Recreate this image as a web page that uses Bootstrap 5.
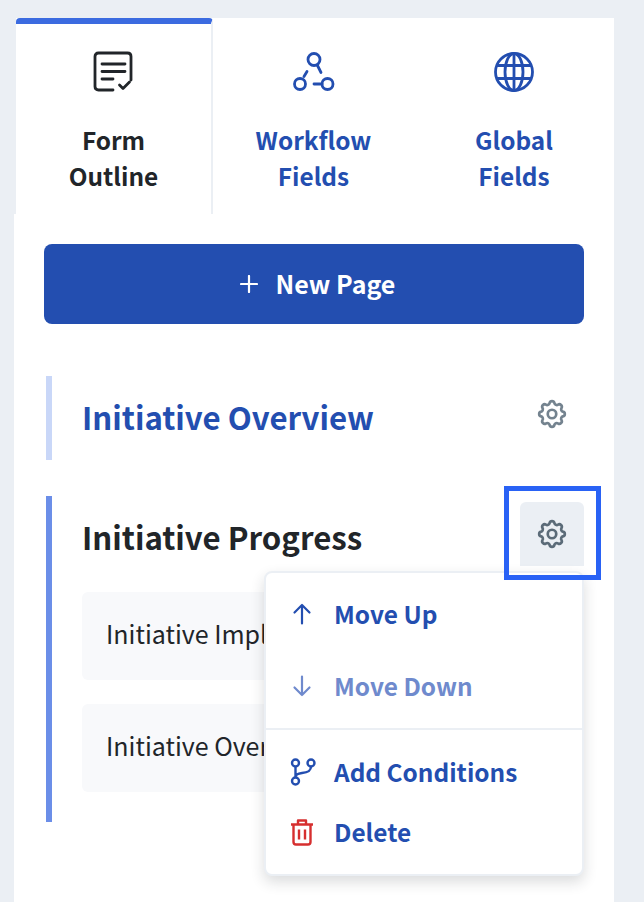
<!DOCTYPE html>
<html lang="en">
<head>
<meta charset="utf-8">
<title>Form Outline</title>
<link href="https://cdn.jsdelivr.net/npm/bootstrap@5.3.0/dist/css/bootstrap.min.css" rel="stylesheet">
<style>
html,body{height:902px;overflow:hidden}
body{background:#ebeff4;font-family:"Noto Sans CJK SC","Noto Sans",sans-serif;color:#212529;position:relative;padding:18px 30px 0 14px}
.shell{width:600px;height:884px;position:relative}
.tabsrow{height:196px;display:flex;margin-left:2px;background:#fff}
.tabitem{width:200px;display:flex;flex-direction:column;align-items:center;padding-top:33px;font-size:24.4px;line-height:36px;font-weight:700;color:#234eb0;text-align:center}
.tabitem.midtab{width:201px}
.tabitem svg{margin-bottom:29px;display:block}
.tabitem.current{width:197px;color:#212529;border-top:6px solid #3b6be0;border-top-left-radius:4px;border-top-right-radius:4px;border-right:2px solid #ebeff4;padding-top:27px}
.bodyarea{padding:30px 30px 0;background:#fff;height:688px}
.addbtn{height:80px;width:100%;background:#234eb0;border:0;border-radius:8px;color:#fff;font-size:25px;font-weight:700;gap:18px;padding-left:19px}
.addbtn:hover{background:#234eb0;color:#fff}
.pagegroup{border-left:6px solid #6b8ee8;padding-left:30px;margin-left:2px}
.pagegroup.first{border-left-color:#c9d7f8;height:84px;margin-top:52px}
.pagegroup.second{height:326px;margin-top:36px}
.pagetitle{font-size:31.2px;line-height:44px;font-weight:700}
.first .pagetitle{color:#234eb0;padding-top:19px}
.second .pagetitle{padding-top:19px;margin-bottom:33px}
.fielditem{height:88px;width:502px;background:#f8f9fb;border-radius:6px;padding:0 24px 4px;font-size:25px;margin-bottom:24px;white-space:nowrap;overflow:hidden}
.gearbtn{position:absolute;left:506px;width:64px;height:64px;display:flex;align-items:center;justify-content:center}
.gearone{top:364px}
.geartwo{top:484px;background:#ebeff4;border-radius:6px 6px 0 0}
.markbox{position:absolute;left:490px;top:468px;width:97px;height:94px;border:5px solid #2962f5;z-index:5}
.actionmenu{position:absolute;left:250px;top:553px;width:320px;height:305px;background:#fff;border:2px solid #ebeff4;border-radius:8px;box-shadow:0 6px 14px rgba(33,37,41,.16);z-index:4;color:#234eb0;font-size:24.4px;font-weight:700}
.menurow{display:flex;align-items:center;padding-left:24px;gap:20px;line-height:36px}
.menurow.muted{color:#6f8acd}
.menurow svg{flex:none}
.rowtall{height:72px;padding-top:10px}
.rowlast{margin-bottom:11px}
.rowshort{height:60px}
.rowgap{margin-top:12px;gap:18px}
.menurule{height:2px;background:#ebeff4}
</style>
</head>
<body>
<div class="shell">
  <div class="tabsrow">
    <div class="tabitem current">
      <svg width="42" height="42" viewBox="0 0 42 42" fill="none" stroke="#212529" stroke-width="2.800" stroke-linecap="round" stroke-linejoin="round"><path d="M20 39H5.500Q2 39 2 35.500V5.500Q2 2 5.500 2h29Q38 2 38 5.500V29"/><path d="M9 13h23M9 20.500h23M9 28h11"/><path d="M26.500 34l3.500 3.500 6.500-6.500"/></svg>
      <span>Form<br>Outline</span>
    </div>
    <div class="tabitem midtab">
      <svg width="42" height="42" viewBox="0 0 42 42" fill="none" stroke="#234eb0" stroke-width="2.800" stroke-linecap="round"><circle cx="21" cy="8.500" r="6"/><circle cx="7" cy="33" r="5.500"/><circle cx="34.500" cy="33" r="5.500"/><path d="M24.500 14.500l3.500 7M11 25.500l3-5M21 33h8"/></svg>
      <span>Workflow<br>Fields</span>
    </div>
    <div class="tabitem">
      <svg width="42" height="42" viewBox="0 0 42 42" fill="none" stroke="#234eb0" stroke-width="2.800"><circle cx="21" cy="21" r="18.500"/><ellipse cx="21" cy="21" rx="9" ry="18.500"/><path d="M21 2.500v37M4 14.500h34M4 27.500h34"/></svg>
      <span>Global<br>Fields</span>
    </div>
  </div>
  <div class="bodyarea">
    <button type="button" class="btn addbtn d-flex align-items-center justify-content-center">
      <svg width="18" height="18" viewBox="0 0 18 18" stroke="#fff" stroke-width="2.200" stroke-linecap="round"><path d="M9 1v16M1 9h16"/></svg>
      <span>New Page</span>
    </button>
    <div class="pagegroup first"><div class="pagetitle">Initiative Overview</div></div>
    <div class="pagegroup second">
      <div class="pagetitle">Initiative Progress</div>
      <div class="fielditem d-flex align-items-center">Initiative Implementation</div>
      <div class="fielditem d-flex align-items-center">Initiative Overview</div>
    </div>
  </div>
  <div class="gearbtn gearone">
    <svg width="34" height="34" viewBox="0 0 24 24" fill="none" stroke="#74838f" stroke-width="1.900" stroke-linejoin="round"><path d="M10.300 4.300c.4-1.800 3-1.800 3.400 0a1.700 1.700 0 0 0 2.600 1.100c1.500-.9 3.300.8 2.400 2.400a1.700 1.700 0 0 0 1 2.500c1.800.4 1.800 3 0 3.400a1.700 1.700 0 0 0-1 2.600c.9 1.500-.9 3.300-2.400 2.400a1.700 1.700 0 0 0-2.600 1c-.4 1.800-3 1.800-3.400 0a1.700 1.700 0 0 0-2.600-1c-1.500.9-3.300-.9-2.400-2.400a1.700 1.700 0 0 0-1-2.600c-1.800-.4-1.800-3 0-3.400a1.700 1.700 0 0 0 1-2.500c-.9-1.600.9-3.300 2.400-2.400a1.700 1.700 0 0 0 2.600-1.100z"/><circle cx="12" cy="12" r="3"/></svg>
  </div>
  <div class="gearbtn geartwo">
    <svg width="34" height="34" viewBox="0 0 24 24" fill="none" stroke="#5b6b78" stroke-width="1.900" stroke-linejoin="round"><path d="M10.300 4.300c.4-1.800 3-1.800 3.400 0a1.700 1.700 0 0 0 2.600 1.100c1.500-.9 3.300.8 2.400 2.400a1.700 1.700 0 0 0 1 2.500c1.800.4 1.800 3 0 3.400a1.700 1.700 0 0 0-1 2.600c.9 1.500-.9 3.300-2.400 2.400a1.700 1.700 0 0 0-2.600 1c-.4 1.800-3 1.800-3.400 0a1.700 1.700 0 0 0-2.600-1c-1.500.9-3.300-.9-2.400-2.400a1.700 1.700 0 0 0-1-2.600c-1.800-.4-1.800-3 0-3.400a1.700 1.700 0 0 0 1-2.500c-.9-1.600.9-3.300 2.400-2.400a1.700 1.700 0 0 0 2.600-1.100z"/><circle cx="12" cy="12" r="3"/></svg>
  </div>
  <div class="markbox"></div>
  <div class="actionmenu">
    <div class="menurow rowtall"><svg width="24" height="24" viewBox="0 0 24 24" fill="none" stroke="#234eb0" stroke-width="2.200" stroke-linecap="round" stroke-linejoin="round"><path d="M12 21.500V3M4.500 10.500L12 3l7.500 7.500"/></svg><span>Move Up</span></div>
    <div class="menurow muted rowtall rowlast"><svg width="24" height="24" viewBox="0 0 24 24" fill="none" stroke="#6f8acd" stroke-width="2.200" stroke-linecap="round" stroke-linejoin="round"><path d="M12 2.500V21M4.500 13.500L12 21l7.500-7.500"/></svg><span>Move Down</span></div>
    <div class="menurule"></div>
    <div class="menurow rowshort rowgap"><svg width="26" height="28" viewBox="0 0 26 28" fill="none" stroke="#234eb0" stroke-width="2.400"><circle cx="5.500" cy="5" r="3.500"/><circle cx="5.500" cy="23" r="3.500"/><circle cx="21" cy="5" r="3.500"/><path d="M5.500 8.500v11M21 8.500c0 5-4 6-9 6.500-3.500.4-6.500 1-6.500 4"/></svg><span>Add Conditions</span></div>
    <div class="menurow rowshort"><svg width="24" height="28" viewBox="0 0 24 28" fill="none" stroke="#d62f2f" stroke-width="2.400" stroke-linejoin="round"><path d="M1 6.500h22M8 6V2.500h8V6M3.500 6.500V24a2.500 2.500 0 0 0 2.500 2.500h12a2.500 2.500 0 0 0 2.500-2.500V6.500M9 11.500v10M15 11.500v10"/></svg><span>Delete</span></div>
  </div>
</div>
</body>
</html>
